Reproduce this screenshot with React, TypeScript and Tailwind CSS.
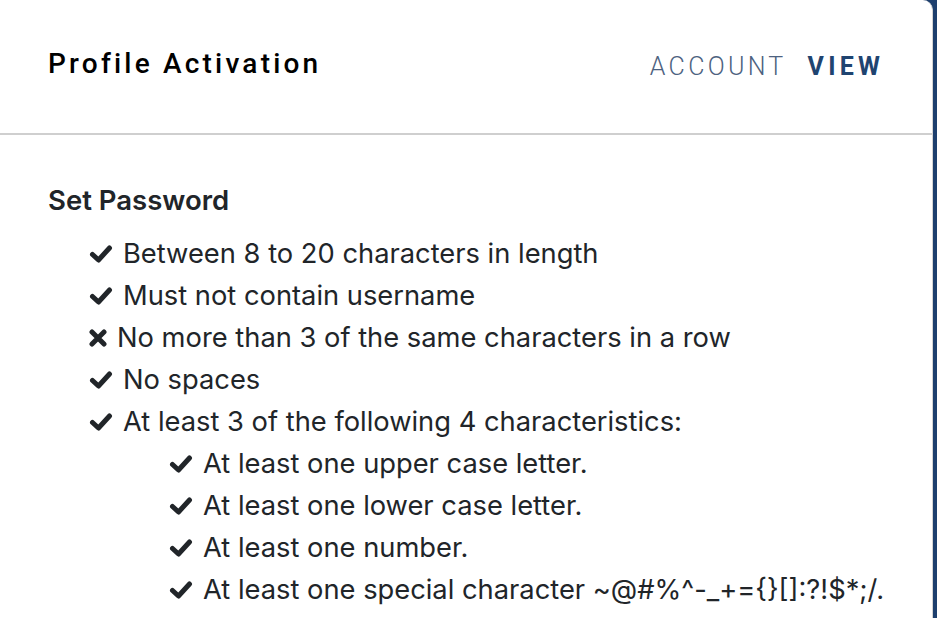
type Rule = { text: string; ok: boolean; nested?: boolean };

const rules: Rule[] = [
  { text: "Between 8 to 20 characters in length", ok: true },
  { text: "Must not contain username", ok: true },
  { text: "No more than 3 of the same characters in a row", ok: false },
  { text: "No spaces", ok: true },
  { text: "At least 3 of the following 4 characteristics:", ok: true },
  { text: "At least one upper case letter.", ok: true, nested: true },
  { text: "At least one lower case letter.", ok: true, nested: true },
  { text: "At least one number.", ok: true, nested: true },
  { text: "At least one special character ~@#%^-_+={}[]:?!$*;/.", ok: true, nested: true },
];

function CheckIcon() {
  return (
    <svg viewBox="0 0 24 20" className="w-[24px] h-[20px] mr-[10px] shrink-0" aria-hidden>
      <polyline
        points="3.5,10.5 9.5,16 20.5,4"
        fill="none"
        stroke="currentColor"
        strokeWidth="5"
        strokeLinecap="round"
        strokeLinejoin="round"
      />
    </svg>
  );
}

function CrossIcon() {
  return (
    <svg viewBox="0 0 18 18" className="w-[18px] h-[18px] mr-[10px] shrink-0" aria-hidden>
      <path
        d="M3 3 L15 15 M15 3 L3 15"
        fill="none"
        stroke="currentColor"
        strokeWidth="5"
        strokeLinecap="round"
      />
    </svg>
  );
}

function RuleRow({ rule }: { rule: Rule }) {
  return (
    <li className={`flex items-center h-[42px] ${rule.nested ? "pl-[121px]" : "pl-[41px]"}`}>
      {rule.ok ? <CheckIcon /> : <CrossIcon />}
      <span>{rule.text}</span>
    </li>
  );
}

export default function App() {
  return (
    <div className="flex h-[618px] w-[937px] overflow-hidden bg-[#1d3f6e]">
      <div className="w-[933px] h-full bg-white rounded-tr-[10px] border-r border-[#d4d4d4] flex flex-col">
        <header className="h-[135px] shrink-0 flex items-center justify-between pl-[48px] pr-[48px] border-b-2 border-[#cfcfcf]">
          <h1
            className="text-[28px] font-medium tracking-[3.2px] text-black mb-[6px]"
            style={{ fontFamily: "Roboto, 'Liberation Sans', sans-serif" }}
          >
            Profile Activation
          </h1>
          <nav
            className="flex items-center gap-[21px] text-[25px]"
            style={{ fontFamily: "Roboto, 'Liberation Sans', sans-serif" }}
          >
            <span className="font-light tracking-[3.3px] text-[#4d6280]">ACCOUNT</span>
            <span className="font-bold tracking-[4.2px] text-[#1f4470]">VIEW</span>
          </nav>
        </header>
        <section
          className="pt-[47px] pl-[48px] text-[#212529]"
          style={{ fontFamily: "Inter, 'Liberation Sans', sans-serif" }}
        >
          <h2 className="text-[27.5px] font-semibold leading-[36px] mb-[15px]">Set Password</h2>
          <ul className="text-[27.3px] -ml-[48px] pl-[48px]">
            {rules.map((r, i) => (
              <RuleRow key={i} rule={r} />
            ))}
          </ul>
        </section>
      </div>
    </div>
  );
}
